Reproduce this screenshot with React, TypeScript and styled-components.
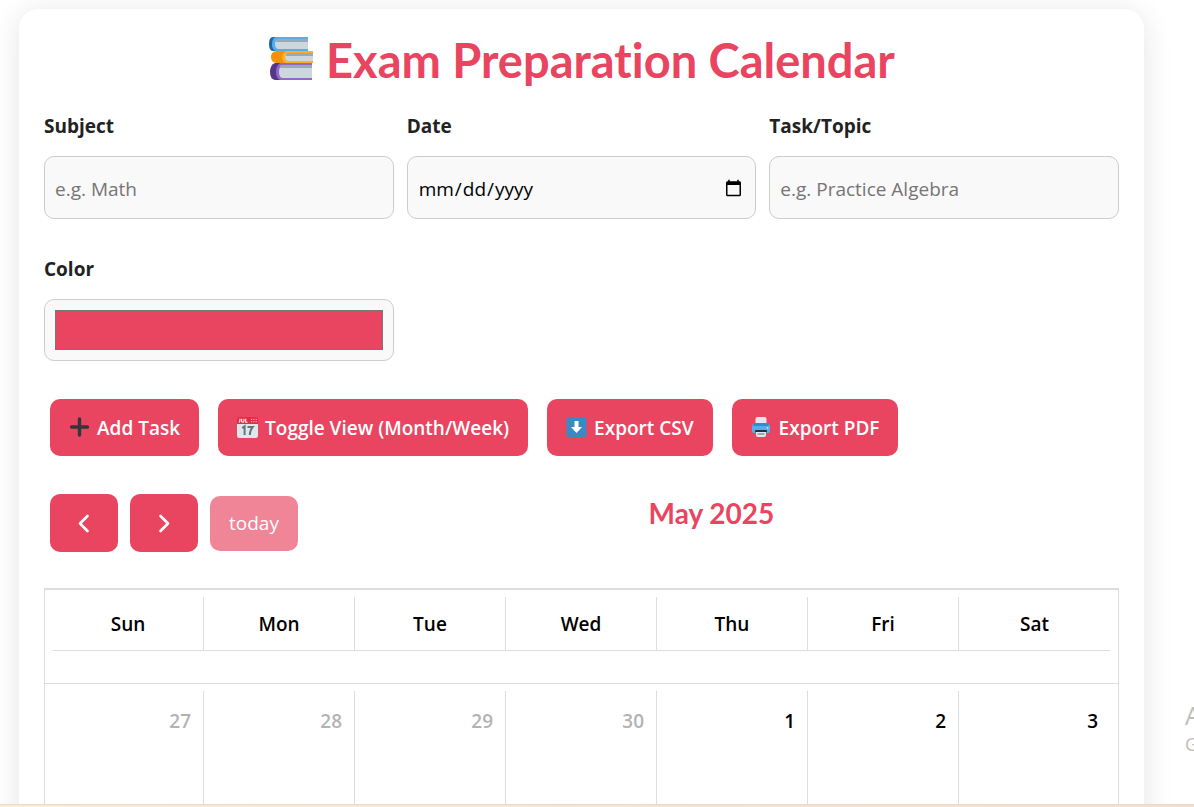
import React from "react";
import styled, { createGlobalStyle, css } from "styled-components";

const accent = "#e94560";
const line = "#dddddd";
const cellLine = "#dcdce3";
const bodyFont = '"Open Sans", "Noto Sans", sans-serif';
const headingFont = 'Lato, "Open Sans", sans-serif';

const GlobalStyle = createGlobalStyle`
  *, *::before, *::after { box-sizing: border-box; }
  body { margin: 0; background: #ffffff; color: #222222; font-family: ${bodyFont}; font-size: 19px; }
`;

const Page = styled.div`
  position: relative;
  display: flex;
  flex-direction: column;
  height: 100vh;
  overflow: hidden;
`;

const Viewport = styled.div`
  flex: 1;
  min-height: 0;
  overflow: hidden;
  padding: 9px 50px 0 19px;
`;

const BottomEdge = styled.div`
  flex: none;
  height: 3px;
  background: linear-gradient(90deg, #f8ecd2, #f5e6d8 40%, #f3e0cc);
  border-top: 1px solid #e8d9c8;
`;

const Card = styled.main`
  background: #ffffff;
  border-radius: 20px;
  padding: 25px;
  box-shadow: 0 4px 30px rgba(0, 0, 0, 0.11);
`;

const Title = styled.h1`
  display: flex;
  justify-content: center;
  align-items: center;
  gap: 13px;
  margin: 0;
  height: 53px;
  color: ${accent};
  font: 700 47px/53px ${headingFont};
  font-variant-ligatures: none;

  svg { width: 45px; height: 45px; margin-bottom: 4px; }
`;

const Form = styled.form`
  display: grid;
  grid-template-columns: repeat(3, minmax(0, 1fr));
  gap: 37px 13px;
  margin-top: 26px;
`;

const Field = styled.div`
  display: flex;
  flex-direction: column;
  gap: 16px;
`;

const Label = styled.label`
  font-size: 19px;
  line-height: 27px;
  font-weight: 700;
`;

const Input = styled.input`
  width: 100%;
  height: 63px;
  padding: 12px 10px 10px;
  border: 1px solid #cccccc;
  border-radius: 10px;
  background: #f9f9f9;
  color: #000000;
  font: 400 19px/26px ${bodyFont};

  &::placeholder { color: #757575; }

  &[type="color"] { height: 62px; padding: 10px; }
  &::-webkit-color-swatch-wrapper { padding: 0; }
  &::-webkit-color-swatch { border: 1px solid #777777; border-radius: 0; }
`;

const Actions = styled.div`
  display: flex;
  flex-wrap: wrap;
  gap: 19px;
  margin: 38px 6px 0;
`;

const button = css`
  display: inline-flex;
  align-items: center;
  justify-content: center;
  border: 0;
  border-radius: 10px;
  background: ${accent};
  color: #ffffff;
  font-family: ${bodyFont};
  cursor: pointer;
`;

const ActionButton = styled.button`
  ${button}
  height: 57px;
  padding: 0 19px;
  gap: 7px;
  font-size: 19px;
  font-weight: 600;
  white-space: nowrap;

  svg { width: 21px; height: 21px; flex: none; }
`;

const Toolbar = styled.div`
  display: flex;
  justify-content: space-between;
  align-items: center;
  margin-top: 38px;
`;

const NavGroup = styled.div`
  display: flex;
  align-items: center;
  gap: 12px;
  padding: 0 6px;
`;

const NavButton = styled.button`
  ${button}
  width: 68px;
  height: 58px;

  svg { width: 24px; height: 24px; }
`;

const TodayButton = styled.button`
  ${button}
  height: 55px;
  padding: 0 19px;
  font-size: 19px;
  opacity: 0.65;
`;

const Month = styled.h2`
  align-self: flex-start;
  margin: 0;
  color: ${accent};
  font: 700 28px/38px ${headingFont};
`;

const Calendar = styled.section`
  margin-top: 36px;
  border: 1px solid ${line};
  border-top-width: 2px;
`;

const CalendarHead = styled.div`
  padding: 7px 8px 32px;
  border-bottom: 1px solid ${line};
`;

const CalendarBody = styled.div`
  padding: 7px 8px;
`;

const Grid = styled.table`
  width: 100%;
  table-layout: fixed;
  border-collapse: separate;
  border-spacing: 0;
`;

const Weekday = styled.th`
  height: 54px;
  padding: 0;
  border-right: 1px solid ${cellLine};
  border-bottom: 1px solid ${cellLine};
  color: #000000;
  font-size: 19px;
  font-weight: 600;

  &:last-child { border-right: 0; }
`;

const Day = styled.td<{ $muted?: boolean }>`
  height: 150px;
  padding: 17px 12px;
  border-right: 1px solid ${cellLine};
  color: ${(p) => (p.$muted ? "#b3b3b3" : "#000000")};
  font-size: 19px;
  line-height: 26px;
  font-weight: 600;
  text-align: right;
  vertical-align: top;

  &:last-child { border-right: 0; }
`;

const Watermark = styled.aside`
  position: absolute;
  top: 700px;
  left: calc(100% - 9px);
  color: #bdbdbd;
  font-size: 18px;
  line-height: 28px;
`;

const WatermarkTitle = styled.div`
  font-size: 25px;
  line-height: 30px;
`;

const Books = () => (
  <svg viewBox="0 0 45 45" aria-hidden="true">
    <path d="M5 1H40V3H38V13H40V15H5Q1 15 1 8T5 1Z" fill="#226699" />
    <path d="M8 1H40V15H8Q4 14 4 8T8 1Z" fill="#55acee" />
    <path d="M10 3H40V13H10Q7 12 7 8T10 3Z" fill="#ccd6dd" />
    <path d="M9 3H40V6H8Q8 4 9 3Z" fill="#9aaab4" />
    <path d="M8 15H45V27H8Q3 26 3 21T8 15Z" fill="#f4900c" />
    <path d="M18 15H45V27H18Q14 25 14 21T18 15Z" fill="#ffac33" />
    <path d="M20 17H45V25H20Q17 24 17 21T20 17Z" fill="#ccd6dd" />
    <path d="M19 17H45V20H18Q18 18 19 17Z" fill="#9aaab4" />
    <path d="M7 27H44V44H7Q2 43 2 36T7 27Z" fill="#553788" />
    <path d="M12 27H44V44H12Q8 42 8 36T12 27Z" fill="#9266cc" />
    <path d="M14 29H44V42H14Q11 41 11 36T14 29Z" fill="#ccd6dd" />
    <path d="M13 29H44V32H12Q12 30 13 29Z" fill="#9aaab4" />
  </svg>
);

const Plus = () => (
  <svg viewBox="0 0 21 21" aria-hidden="true">
    <path d="M10.5 2V18M2.5 10H18.5" stroke="#31373d" strokeWidth="3.4" strokeLinecap="round" />
  </svg>
);

const CalendarIcon = () => (
  <svg viewBox="0 0 36 36" aria-hidden="true">
    <path d="M0 8H36V32Q36 36 32 36H4Q0 36 0 32Z" fill="#e0e7ec" />
    <path d="M3 0H33Q36 0 36 3V12H0V3Q0 0 3 0Z" fill="#dd2e44" />
    <path d="M5 3V7Q5 9 3 8M8 3V7Q8 9 10 9T12 7V3M15 3V9H18" stroke="#ffffff" strokeWidth="1.8" fill="none" />
    <path d="M24 4H34M24 8H34" stroke="#f4abba" strokeWidth="2" strokeDasharray="2 2" />
    <path d="M9 19L13 16V31M18 17H27Q22 23 22 31" stroke="#66757f" strokeWidth="3.4" fill="none" />
  </svg>
);

const Download = () => (
  <svg viewBox="0 0 21 21" aria-hidden="true">
    <rect x="0.5" width="20" height="20" rx="2" fill="#3b88c3" />
    <path d="M8.5 4H12.5V10H16L10.5 16L5 10H8.5Z" fill="#ffffff" />
  </svg>
);

const Printer = () => (
  <svg viewBox="0 0 21 21" aria-hidden="true">
    <rect x="4.5" width="11" height="10" rx="2" fill="#e1e8ed" />
    <path d="M4 6H16Q19 7 19 10V14Q19 16 17 16H3Q1 16 1 14V10Q1 7 4 6Z" fill="#55acee" />
    <path d="M4 6H16Q18 7 18 9H2Q2 7 4 6Z" fill="#3b88c3" />
    <circle cx="16.5" cy="11" r="0.9" fill="#bde3ff" />
    <rect x="4" y="13" width="12" height="2.5" rx="1" fill="#292f33" />
    <path d="M5 15H15V18Q15 20 13 20H7Q5 20 5 18Z" fill="#e1e8ed" />
    <path d="M6.5 16H13.5V18H6.5Z" fill="#9aaab4" />
  </svg>
);

const Chevron = ({ d }: { d: string }) => (
  <svg viewBox="0 0 24 24" fill="none" aria-hidden="true">
    <path d={d} stroke="#ffffff" strokeWidth="2.6" strokeLinecap="round" strokeLinejoin="round" />
  </svg>
);

const weekdays = ["Sun", "Mon", "Tue", "Wed", "Thu", "Fri", "Sat"];
const days = [
  { n: 27, muted: true },
  { n: 28, muted: true },
  { n: 29, muted: true },
  { n: 30, muted: true },
  { n: 1 },
  { n: 2 },
  { n: 3 },
];

export default function App() {
  return (
    <Page>
      <GlobalStyle />
      <Viewport>
        <Card>
          <Title>
            <Books />
            <span>Exam Preparation Calendar</span>
          </Title>

          <Form>
            <Field>
              <Label htmlFor="subject">Subject</Label>
              <Input id="subject" type="text" placeholder="e.g. Math" />
            </Field>
            <Field>
              <Label htmlFor="date">Date</Label>
              <Input id="date" type="date" />
            </Field>
            <Field>
              <Label htmlFor="task">Task/Topic</Label>
              <Input id="task" type="text" placeholder="e.g. Practice Algebra" />
            </Field>
            <Field>
              <Label htmlFor="color">Color</Label>
              <Input id="color" type="color" defaultValue={accent} />
            </Field>
          </Form>

          <Actions>
            <ActionButton type="button"><Plus />Add Task</ActionButton>
            <ActionButton type="button"><CalendarIcon />Toggle View (Month/Week)</ActionButton>
            <ActionButton type="button"><Download />Export CSV</ActionButton>
            <ActionButton type="button"><Printer />Export PDF</ActionButton>
          </Actions>

          <Toolbar>
            <NavGroup>
              <NavButton type="button" aria-label="Previous month"><Chevron d="M15.5 5L8 12.5L15.5 20" /></NavButton>
              <NavButton type="button" aria-label="Next month"><Chevron d="M8.5 5L16 12.5L8.5 20" /></NavButton>
              <TodayButton type="button" disabled>today</TodayButton>
            </NavGroup>
            <Month>May 2025</Month>
            <div />
          </Toolbar>

          <Calendar aria-label="May 2025">
            <CalendarHead>
              <Grid>
                <thead>
                  <tr>{weekdays.map((d) => <Weekday key={d} scope="col">{d}</Weekday>)}</tr>
                </thead>
              </Grid>
            </CalendarHead>
            <CalendarBody>
              <Grid>
                <tbody>
                  <tr>{days.map((d) => <Day key={d.n} $muted={d.muted}>{d.n}</Day>)}</tr>
                </tbody>
              </Grid>
            </CalendarBody>
          </Calendar>
        </Card>
      </Viewport>
      <BottomEdge />
      <Watermark>
        <WatermarkTitle>A</WatermarkTitle>
        <div>G</div>
      </Watermark>
    </Page>
  );
}
